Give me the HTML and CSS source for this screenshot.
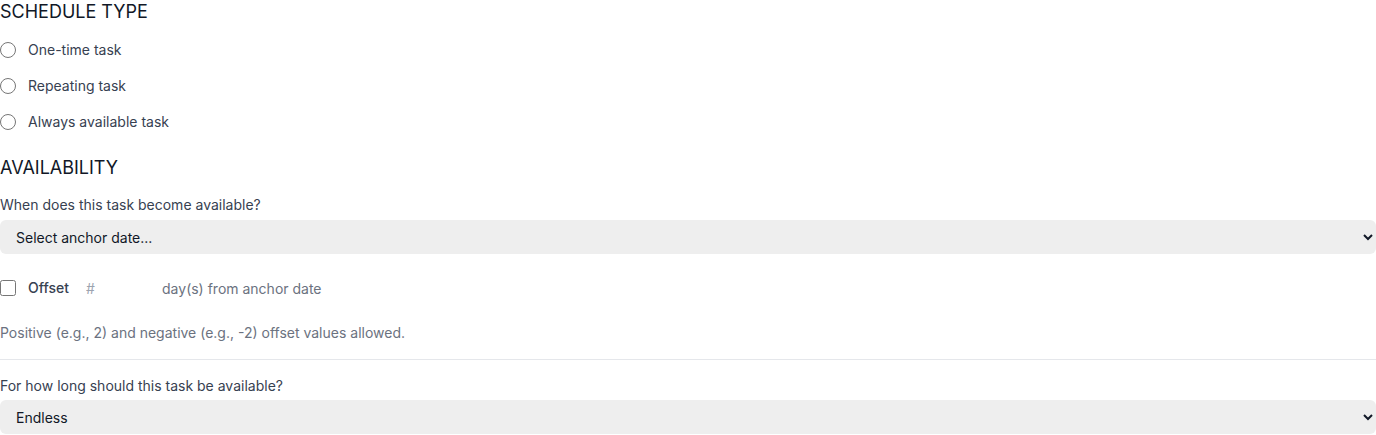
FILE: index.html
```html
<!DOCTYPE html>
<html>
<head>
<meta charset="utf-8">
<link rel="stylesheet" href="styles.css">
</head>
<body>
<div class="form">
  <h2 class="section-title">SCHEDULE TYPE</h2>
  <div class="radio-list">
    <label class="choice"><input type="radio" name="type"><span>One-time task</span></label>
    <label class="choice"><input type="radio" name="type"><span>Repeating task</span></label>
    <label class="choice"><input type="radio" name="type"><span>Always available task</span></label>
  </div>
  <h2 class="section-title avail">AVAILABILITY</h2>
  <label class="field-label">When does this task become available?</label>
  <select class="select"><option>Select anchor date...</option></select>
  <div class="offset-row">
    <label class="choice"><input type="checkbox"><span class="offset-label">Offset</span></label>
    <input class="offset-input" type="text" placeholder="#">
    <span class="offset-suffix">day(s) from anchor date</span>
  </div>
  <p class="help">Positive (e.g., 2) and negative (e.g., -2) offset values allowed.</p>
  <hr class="divider">
  <label class="field-label second">For how long should this task be available?</label>
  <select class="select last"><option>Endless</option></select>
</div>
</body>
</html>
```
FILE: styles.css
```css
* { box-sizing: border-box; }
html, body { margin: 0; padding: 0; background: #fff; }
body {
  font-family: Inter, "Noto Sans", sans-serif;
  color: #374151;
}
.form { display: flex; flex-direction: column; }
.section-title {
  margin: 0;
  font-size: 18px;
  font-weight: 400;
  line-height: 24px;
  color: #111827;
}
.radio-list {
  display: flex;
  flex-direction: column;
  gap: 16px;
  margin-top: 16px;
}
.choice {
  display: flex;
  align-items: center;
  gap: 12px;
  font-size: 14px;
  line-height: 20px;
  color: #374151;
}
.choice input {
  margin: 0;
  width: 16px;
  height: 16px;
}
.avail { margin-top: 24px; }
.field-label {
  display: block;
  margin-top: 15px;
  font-size: 14px;
  line-height: 20px;
  color: #374151;
}
.select {
  margin-top: 5px;
  height: 34px;
  width: 100%;
  background-color: #eeeeee;
  border: none;
  border-radius: 6px;
  padding: 0 12px;
  font-family: Inter, "Noto Sans", sans-serif;
  font-size: 14px;
  color: #111827;
}
.select.last { margin-top: 4px; }
.offset-row {
  display: flex;
  align-items: center;
  margin-top: 24px;
  height: 20px;
  font-size: 14px;
}
.offset-label { font-weight: 500; color: #374151; }
.offset-input {
  margin-left: 17px;
  width: 60px;
  border: none;
  padding: 0;
  font-family: Inter, "Noto Sans", sans-serif;
  font-size: 14px;
  background: transparent;
  outline: none;
}
.offset-input::placeholder { color: #9ca3af; }
.offset-suffix { margin-left: 16px; color: #6b7280; }
.help {
  margin: 25px 0 0;
  font-size: 14px;
  line-height: 20px;
  color: #6b7280;
}
.divider {
  margin: 16px 0 0;
  border: none;
  border-top: 1px solid #e5e7eb;
  height: 0;
}
.field-label.second { margin-top: 16px; }
```
